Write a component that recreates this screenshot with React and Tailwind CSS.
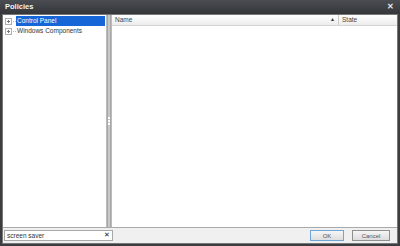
import React from "react";

const PlusBox = () => (
  <svg width="7" height="7" viewBox="0 0 7 7" className="shrink-0">
    <rect x="0.5" y="0.5" width="6" height="6" fill="#fff" stroke="#b0b0b0" />
    <path d="M2 3.5h3M3.5 2v3" stroke="#777" />
  </svg>
);

const TreeRow = ({ label, selected }) => (
  <div className="flex items-center h-[10px]">
    <div className="w-[10px] flex items-center justify-center">
      <PlusBox />
    </div>
    <div className="w-[3px] border-t border-dotted border-[#bbb]" />
    <div
      className={`flex-1 h-[10px] leading-[10px] pl-[1px] ${
        selected ? "bg-[#1766d8] text-white" : "text-[#333]"
      }`}
    >
      {label}
    </div>
  </div>
);

export default function App() {
  return (
    <div
      className="w-[400px] h-[246px] bg-[#3b3d41] flex flex-col text-[6.5px]"
      style={{ fontFamily: "'Liberation Sans', Arial, sans-serif" }}
    >
      {/* Title bar */}
      <div className="h-[14px] flex items-center justify-between px-[5px] bg-gradient-to-b from-[#4a4d52] to-[#34363a]">
        <span className="text-[#f4f4f4] text-[7.5px] font-semibold">Policies</span>
        <span className="text-[#e8e8e8] text-[8px] font-bold leading-none mr-[1px]">✕</span>
      </div>

      <div className="flex-1 flex flex-col mx-[2px] mb-[2px] bg-[#f0f0f0] border border-[#777]">
        {/* main */}
        <div className="flex-1 flex">
          {/* left tree */}
          <div className="w-[104px] bg-white border-r border-[#bbb] pt-[1px] pr-[1px]">
            <TreeRow label="Control Panel" selected />
            <TreeRow label="Windows Components" />
          </div>
          {/* splitter */}
          <div className="w-[4px] bg-[#c8c8c8] border-x border-[#a8a8a8] flex items-center justify-center">
            <div className="flex flex-col gap-[1px]">
              <div className="w-[2px] h-[2px] bg-white" />
              <div className="w-[2px] h-[2px] bg-white" />
              <div className="w-[2px] h-[2px] bg-white" />
            </div>
          </div>
          {/* right list */}
          <div className="flex-1 bg-white border-l border-[#bbb] flex flex-col">
            <div className="h-[11px] flex border-b border-[#d5d5d5] bg-gradient-to-b from-[#ffffff] to-[#ececec] text-[#444]">
              <div className="flex-1 flex items-center justify-between pl-[3px] pr-[3px] border-r border-[#ccc]">
                <span>Name</span>
                <span className="text-[5px] text-[#333]">▲</span>
              </div>
              <div className="w-[58px] flex items-center pl-[3px]">State</div>
            </div>
            <div className="flex-1" />
          </div>
        </div>

        {/* bottom bar */}
        <div className="h-[16px] flex items-center justify-between px-[1px] border-t border-[#aaa]">
          <div className="w-[109px] h-[11px] bg-white border border-[#a8a8a8] flex items-center justify-between px-[2px] text-[#333]">
            <span>screen saver</span>
            <span className="text-[7px] text-[#222]">✕</span>
          </div>
          <div className="flex items-center gap-[8px] mr-[6px]">
            <button className="w-[34px] h-[11px] border border-[#6ea6d6] bg-gradient-to-b from-[#f6f6f6] to-[#dedede] text-[#555] text-[6px] leading-none">
              OK
            </button>
            <button className="w-[38px] h-[11px] border border-[#8f8f8f] bg-gradient-to-b from-[#f6f6f6] to-[#dcdcdc] text-[#555] text-[6px] leading-none">
              Cancel
            </button>
          </div>
        </div>
      </div>
    </div>
  );
}
